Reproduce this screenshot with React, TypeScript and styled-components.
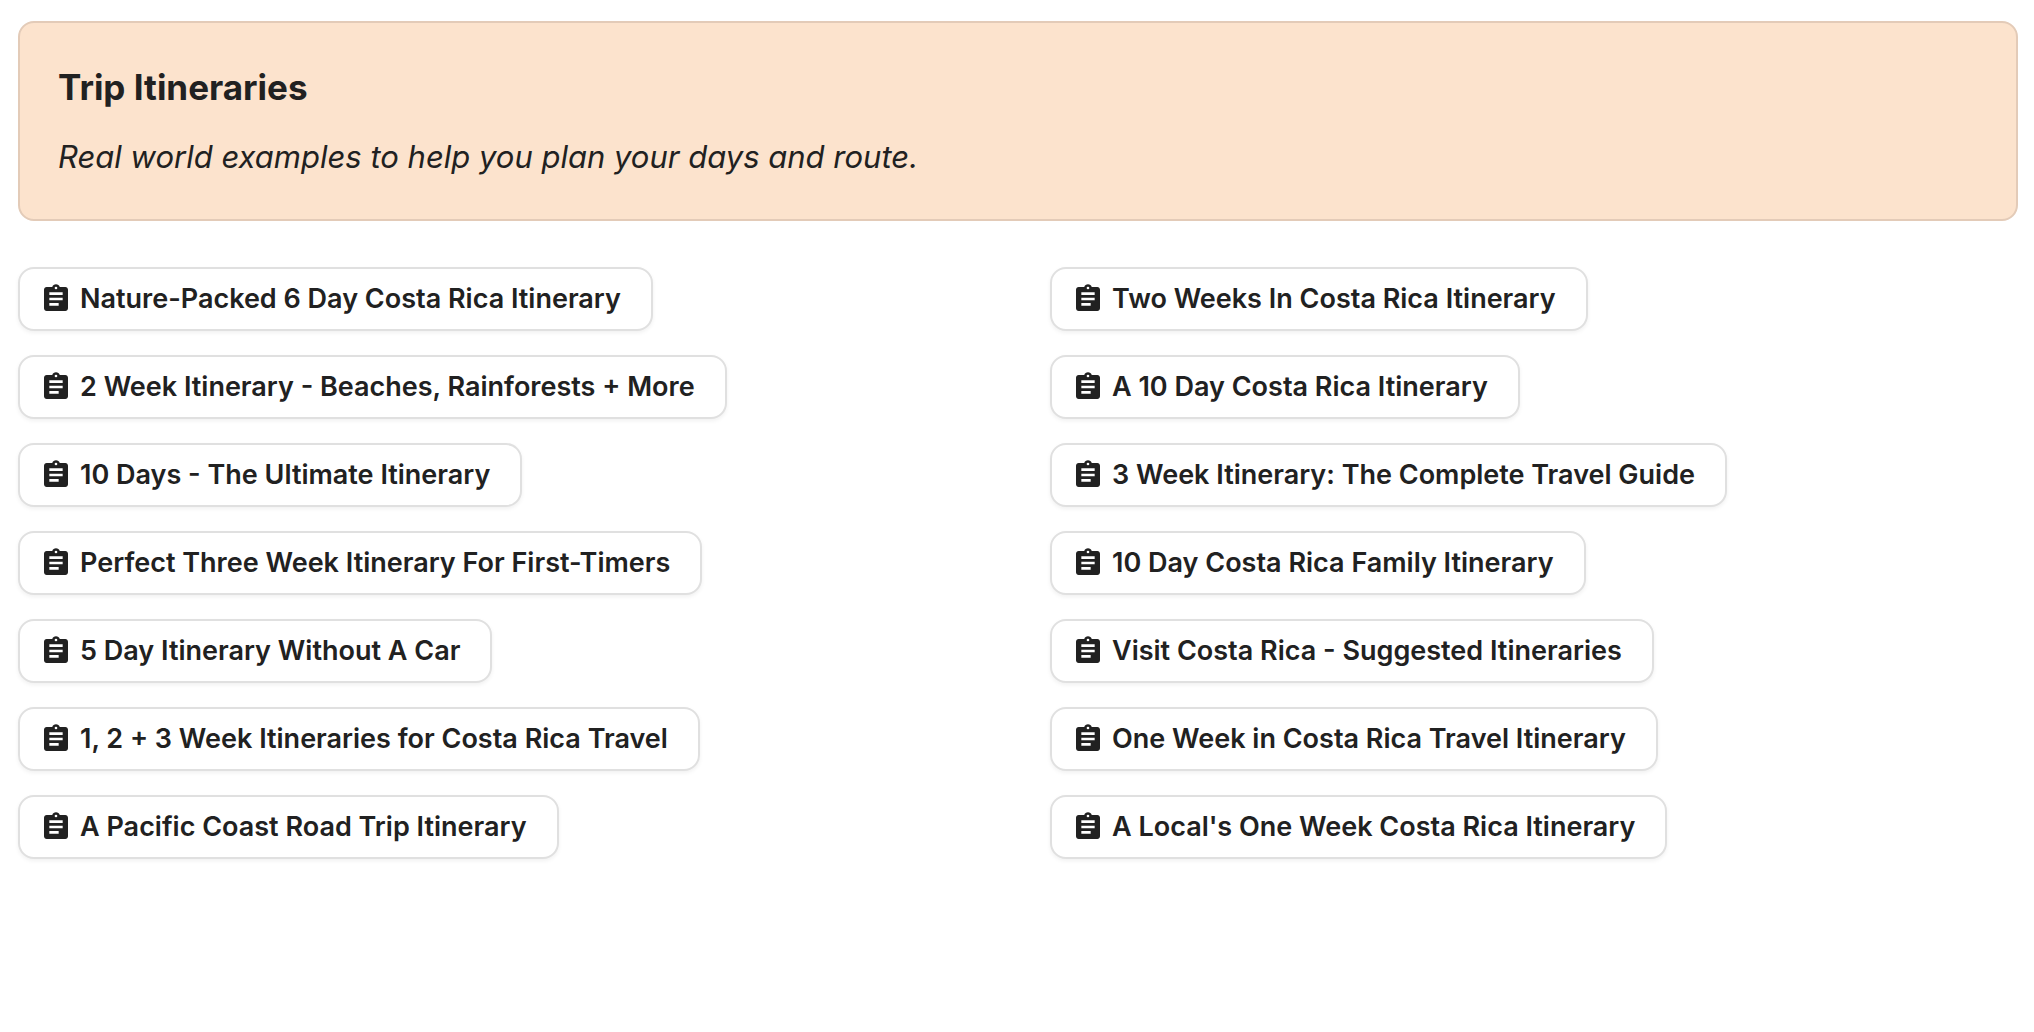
import React from "react";
import styled, { createGlobalStyle } from "styled-components";

const GlobalStyle = createGlobalStyle`
  *, *::before, *::after { box-sizing: border-box; }
  body {
    margin: 0;
    background: #ffffff;
    color: #212121;
    font-family: Inter, "Liberation Sans", sans-serif;
  }
`;

const Page = styled.main`
  display: flex;
  flex-direction: column;
  gap: 46px;
  padding: 21px 16px 48px 18px;
`;

const Banner = styled.header`
  display: flex;
  flex-direction: column;
  gap: 28px;
  padding: 42px 38px;
  border: 2px solid #e3cbb8;
  border-radius: 16px;
  background: #fce3cd;
`;

const Title = styled.h1`
  margin: 0;
  font-size: 35px;
  line-height: 44px;
  font-weight: 700;
`;

const Subtitle = styled.p`
  margin: 0;
  font-size: 31px;
  line-height: 40px;
  font-style: italic;
  font-weight: 400;
`;

const Columns = styled.div`
  display: grid;
  grid-template-columns: 1fr 1fr;
  gap: 64px;
`;

const LinkList = styled.ul`
  display: flex;
  flex-direction: column;
  align-items: flex-start;
  gap: 24px;
  margin: 0;
  padding: 0;
  list-style: none;
`;

const LinkButton = styled.a`
  display: flex;
  align-items: center;
  gap: 8px;
  padding: 10px 30px 10px 20px;
  border: 2px solid #e0e0e0;
  border-radius: 16px;
  background: #ffffff;
  box-shadow: 0 2px 4px rgba(0, 0, 0, 0.06);
  color: inherit;
  font-size: 27px;
  line-height: 40px;
  font-weight: 600;
  text-decoration: none;
`;

const Icon = styled.svg`
  flex: none;
  width: 32px;
  height: 32px;
  fill: currentColor;
`;

function ClipboardIcon() {
  return (
    <Icon viewBox="0 0 24 24" aria-hidden="true">
      <path
        fillRule="evenodd"
        d="M19 3h-4.18C14.4 1.84 13.3 1 12 1s-2.4.84-2.82 2H5c-1.1 0-2 .9-2 2v14c0 1.1.9 2 2 2h14c1.1 0 2-.9 2-2V5c0-1.1-.9-2-2-2zm-7-.25a1 1 0 1 1 0 2 1 1 0 0 1 0-2zM14 17H7v-2h7v2zm3-4H7v-2h10v2zm0-4H7V7h10v2z"
      />
    </Icon>
  );
}

const columns: string[][] = [
  [
    "Nature-Packed 6 Day Costa Rica Itinerary",
    "2 Week Itinerary - Beaches, Rainforests + More",
    "10 Days - The Ultimate Itinerary",
    "Perfect Three Week Itinerary For First-Timers",
    "5 Day Itinerary Without A Car",
    "1, 2 + 3 Week Itineraries for Costa Rica Travel",
    "A Pacific Coast Road Trip Itinerary",
  ],
  [
    "Two Weeks In Costa Rica Itinerary",
    "A 10 Day Costa Rica Itinerary",
    "3 Week Itinerary: The Complete Travel Guide",
    "10 Day Costa Rica Family Itinerary",
    "Visit Costa Rica - Suggested Itineraries",
    "One Week in Costa Rica Travel Itinerary",
    "A Local's One Week Costa Rica Itinerary",
  ],
];

export default function App() {
  return (
    <>
      <GlobalStyle />
      <Page>
        <Banner>
          <Title>Trip Itineraries</Title>
          <Subtitle>Real world examples to help you plan your days and route.</Subtitle>
        </Banner>
        <Columns>
          {columns.map((items, index) => (
            <LinkList key={index}>
              {items.map((label) => (
                <li key={label}>
                  <LinkButton href="#">
                    <ClipboardIcon />
                    {label}
                  </LinkButton>
                </li>
              ))}
            </LinkList>
          ))}
        </Columns>
      </Page>
    </>
  );
}
